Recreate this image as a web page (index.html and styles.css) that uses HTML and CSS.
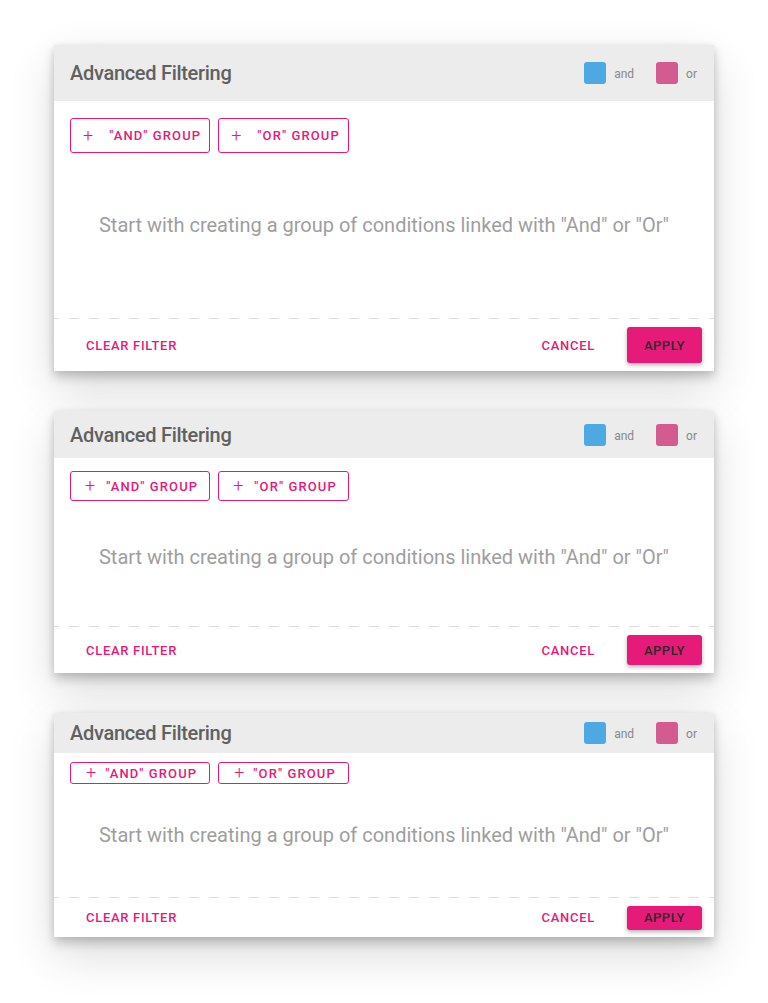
FILE: index.html
```html
<!DOCTYPE html>
<html lang="en">
<head>
<meta charset="utf-8">
<title>Advanced Filtering</title>
<link rel="stylesheet" href="styles.css">
</head>
<body>
<div class="page">
  <section class="card d1">
    <header class="card-head">
      <h2 class="title">Advanced Filtering</h2>
      <div class="legend">
        <span class="swatch and"></span><span class="legend-label">and</span>
        <span class="swatch or"></span><span class="legend-label">or</span>
      </div>
    </header>
    <div class="card-body">
      <div class="group-actions">
        <button class="group-btn"><span class="plus">+</span><span class="btn-text">"AND" GROUP</span></button>
        <button class="group-btn"><span class="plus">+</span><span class="btn-text">"OR" GROUP</span></button>
      </div>
      <p class="empty">Start with creating a group of conditions linked with "And" or "Or"</p>
    </div>
    <div class="divider"></div>
    <footer class="card-foot">
      <button class="flat-btn">CLEAR FILTER</button>
      <div class="foot-right">
        <button class="flat-btn">CANCEL</button>
        <button class="apply-btn">APPLY</button>
      </div>
    </footer>
  </section>

  <section class="card d2">
    <header class="card-head">
      <h2 class="title">Advanced Filtering</h2>
      <div class="legend">
        <span class="swatch and"></span><span class="legend-label">and</span>
        <span class="swatch or"></span><span class="legend-label">or</span>
      </div>
    </header>
    <div class="card-body">
      <div class="group-actions">
        <button class="group-btn"><span class="plus">+</span><span class="btn-text">"AND" GROUP</span></button>
        <button class="group-btn"><span class="plus">+</span><span class="btn-text">"OR" GROUP</span></button>
      </div>
      <p class="empty">Start with creating a group of conditions linked with "And" or "Or"</p>
    </div>
    <div class="divider"></div>
    <footer class="card-foot">
      <button class="flat-btn">CLEAR FILTER</button>
      <div class="foot-right">
        <button class="flat-btn">CANCEL</button>
        <button class="apply-btn">APPLY</button>
      </div>
    </footer>
  </section>

  <section class="card d3">
    <header class="card-head">
      <h2 class="title">Advanced Filtering</h2>
      <div class="legend">
        <span class="swatch and"></span><span class="legend-label">and</span>
        <span class="swatch or"></span><span class="legend-label">or</span>
      </div>
    </header>
    <div class="card-body">
      <div class="group-actions">
        <button class="group-btn"><span class="plus">+</span><span class="btn-text">"AND" GROUP</span></button>
        <button class="group-btn"><span class="plus">+</span><span class="btn-text">"OR" GROUP</span></button>
      </div>
      <p class="empty">Start with creating a group of conditions linked with "And" or "Or"</p>
    </div>
    <div class="divider"></div>
    <footer class="card-foot">
      <button class="flat-btn">CLEAR FILTER</button>
      <div class="foot-right">
        <button class="flat-btn">CANCEL</button>
        <button class="apply-btn">APPLY</button>
      </div>
    </footer>
  </section>
</div>
</body>
</html>
```

FILE: styles.css
```css
* { box-sizing: border-box; }

html, body {
  margin: 0;
  padding: 0;
  background: #ffffff;
}

body {
  font-family: Roboto, "Liberation Sans", sans-serif;
  color: #5f5f5f;
  min-height: 1003px;
}

.page {
  display: flex;
  flex-direction: column;
  gap: 40px;
  padding: 45px 0 66px 54px;
}

.card {
  width: 660px;
  background: #fff;
  box-shadow: 0 6px 10px rgba(0, 0, 0, 0.2), 0 18px 44px rgba(0, 0, 0, 0.14), 0 0 6px rgba(0, 0, 0, 0.06);
}

.d1 { --head: 56px; --gap-top: 17px; --btn-h: 35px; --plus-gap: 16px; --pad-l: 12px; --pad-r: 8px; --msg-top: 60px; --msg-bot: 81px; --foot: 52px; --apply-h: 36px; }
.d2 { --head: 47px; --gap-top: 13px; --btn-h: 30px; --plus-gap: 11px; --pad-l: 14px; --pad-r: 11px; --msg-top: 44px; --msg-bot: 57px; --foot: 46px; --apply-h: 30px; }
.d3 { --head: 40px; --gap-top: 9px; --btn-h: 22px; --plus-gap: 9px; --pad-l: 15px; --pad-r: 12px; --msg-top: 39px; --msg-bot: 50px; --foot: 39px; --apply-h: 24px; }

.card-head {
  height: var(--head);
  background: #ececec;
  display: flex;
  align-items: center;
  justify-content: space-between;
  padding: 0 17px 0 16px;
}

.title {
  margin: 0;
  font-size: 20px;
  font-weight: 500;
  color: #606060;
  letter-spacing: -0.3px;
}

.legend {
  display: flex;
  align-items: center;
}

.swatch {
  width: 22px;
  height: 22px;
  border-radius: 3px;
}

.swatch.and { background: #4ea8e2; }
.swatch.or { background: #d45b8f; margin-left: 22px; }

.legend-label {
  margin-left: 8px;
  padding-top: 2px;
  font-size: 12px;
  color: #888;
}

.card-body {
  padding: var(--gap-top) 16px 0;
}

.group-actions {
  display: flex;
  gap: 8px;
}

.group-btn {
  height: var(--btn-h);
  display: inline-flex;
  align-items: center;
  gap: var(--plus-gap);
  padding: 0 var(--pad-r) 0 var(--pad-l);
  border: 1px solid #e6197a;
  border-radius: 3px;
  background: #fff;
  color: #e6197a;
  font-family: inherit;
  font-size: 13px;
  font-weight: 500;
  letter-spacing: 1.1px;
  cursor: pointer;
}

.plus {
  font-size: 18px;
  font-weight: 300;
  line-height: 1;
  letter-spacing: 0;
}

.empty {
  margin: var(--msg-top) 0 var(--msg-bot);
  line-height: 24px;
  font-size: 20px;
  color: #9e9e9e;
  text-align: center;
}

.divider {
  height: 1px;
  background: repeating-linear-gradient(90deg, #dedede 0 5px, transparent 5px 15px, #dedede 15px 20px);
}

.card-foot {
  height: var(--foot);
  display: flex;
  align-items: center;
  justify-content: space-between;
  padding: 0 12px 0 16px;
}

.foot-right {
  display: flex;
  align-items: center;
  gap: 16px;
}

.flat-btn {
  border: 0;
  background: transparent;
  padding: 0 16px;
  color: #e6197a;
  font-family: inherit;
  font-size: 13px;
  font-weight: 500;
  letter-spacing: 0.7px;
  cursor: pointer;
}

.apply-btn {
  height: var(--apply-h);
  border: 0;
  border-radius: 3px;
  padding: 0 17px;
  background: #e61a78;
  color: #2b2b2b;
  font-family: inherit;
  font-size: 13px;
  font-weight: 500;
  letter-spacing: 0.5px;
  box-shadow: 0 2px 4px rgba(0, 0, 0, 0.3);
  cursor: pointer;
}
```
